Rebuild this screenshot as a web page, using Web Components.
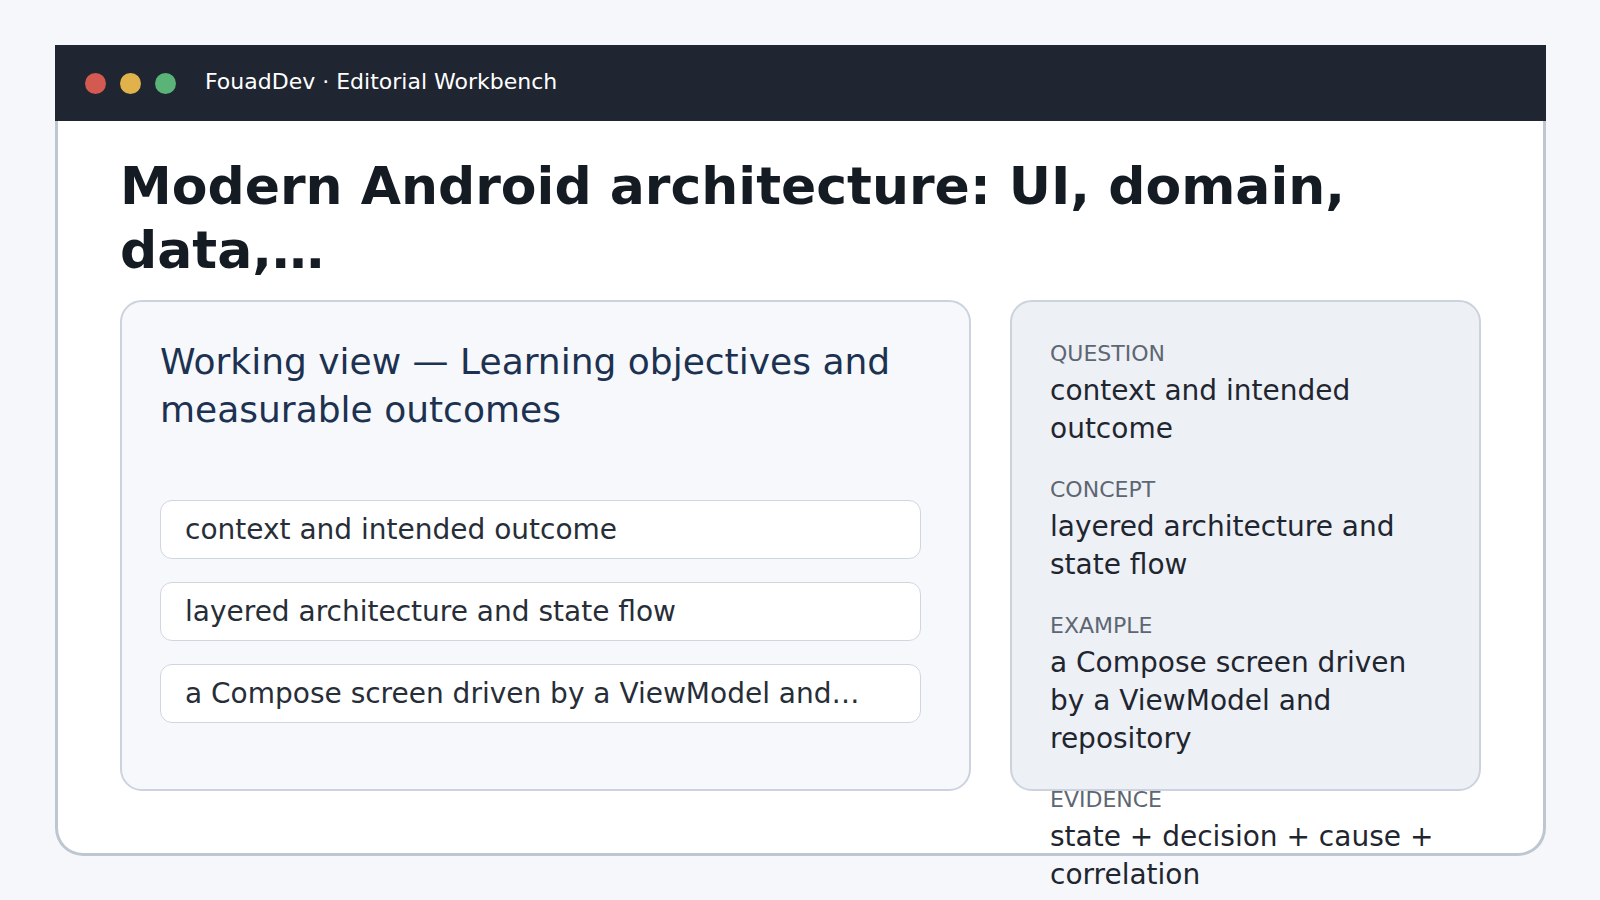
<!DOCTYPE html>
<html lang="en">
<head>
<meta charset="utf-8">
<meta name="viewport" content="width=device-width, initial-scale=1">
<title>FouadDev · Editorial Workbench</title>
<style>
  body {
    margin: 0;
    background: #f5f7fb;
    color: #1f2630;
    font-family: "DejaVu Sans", sans-serif;
  }
</style>
</head>
<body>
<workbench-window>
  <window-bar slot="bar">FouadDev · Editorial Workbench</window-bar>
  <span slot="title">Modern Android architecture: UI, domain, data,…</span>
  <working-view>
    <span slot="heading">Working view — Learning objectives and measurable outcomes</span>
    <view-item>context and intended outcome</view-item>
    <view-item>layered architecture and state flow</view-item>
    <view-item>a Compose screen driven by a ViewModel and…</view-item>
  </working-view>
  <note-panel>
    <note-entry label="QUESTION">context and intended outcome</note-entry>
    <note-entry label="CONCEPT">layered architecture and state flow</note-entry>
    <note-entry label="EXAMPLE">a Compose screen driven by a ViewModel and repository</note-entry>
    <note-entry label="EVIDENCE">state + decision + cause + correlation</note-entry>
  </note-panel>
</workbench-window>

<script>
  class BaseElement extends HTMLElement {
    constructor() {
      super();
      this.attachShadow({ mode: "open" }).innerHTML = this.constructor.markup;
    }
  }

  // Window frame: bar on top, bordered body with a title and two columns.
  customElements.define("workbench-window", class extends BaseElement {
    static markup = `
      <style>
        :host { display: flex; flex-direction: column; box-sizing: border-box; height: 100vh; padding: 45px 54px 44px 55px; }
        main {
          flex: 1; min-height: 0; box-sizing: border-box;
          display: flex; flex-direction: column; gap: 18px;
          padding: 33px 62px 62px;
          background: #fff; border: 3px solid #bec6d2; border-top: 0;
          border-radius: 0 0 28px 28px;
        }
        h1 { margin: 0; font-size: 52px; line-height: 64px; font-weight: 700; color: #151b23; }
        .columns {
          flex: 1; min-height: 0; display: grid; column-gap: 39px;
          grid-template-columns: minmax(0, 851fr) minmax(0, 471fr);
          grid-template-rows: minmax(0, 1fr);
        }
      </style>
      <slot name="bar"></slot>
      <main>
        <h1><slot name="title"></slot></h1>
        <div class="columns"><slot></slot></div>
      </main>`;
  });

  customElements.define("window-bar", class extends BaseElement {
    static markup = `
      <style>
        :host {
          display: flex; align-items: center; gap: 29px;
          box-sizing: border-box; padding: 23px 30px 25px;
          background: #202631; color: #fff;
          font-size: 22px; line-height: 28px;
        }
        .dots { display: flex; gap: 14px; padding-top: 3px; }
        button { width: 21px; height: 21px; padding: 0; border: 0; border-radius: 50%; }
        .close { background: #d35a51; }
        .minimise { background: #e1b24b; }
        .zoom { background: #5ab377; }
      </style>
      <div class="dots">
        <button class="close" type="button" aria-label="Close"></button>
        <button class="minimise" type="button" aria-label="Minimise"></button>
        <button class="zoom" type="button" aria-label="Zoom"></button>
      </div>
      <span><slot></slot></span>`;
  });

  customElements.define("working-view", class extends BaseElement {
    static markup = `
      <style>
        :host {
          display: block; box-sizing: border-box; padding: 36px 48px 36px 38px;
          background: #f6f8fc; border: 2px solid #ccd3de; border-radius: 22px;
        }
        h2 { margin: 0 0 66px; font-size: 36px; line-height: 48px; font-weight: 400; color: #1c3250; }
        .items { display: flex; flex-direction: column; gap: 23px; }
      </style>
      <h2><slot name="heading"></slot></h2>
      <div class="items" role="list"><slot></slot></div>`;
  });

  customElements.define("view-item", class extends BaseElement {
    static markup = `
      <style>
        :host {
          display: block; padding: 10px 24px 9px;
          background: #fff; border: 1px solid #d0d6e0; border-radius: 12px;
          color: #272e38; font-size: 28px; line-height: 38px;
          white-space: nowrap;
        }
      </style>
      <slot></slot>`;
    connectedCallback() { this.setAttribute("role", "listitem"); }
  });

  // The entries may run past the panel's lower edge and stay visible.
  customElements.define("note-panel", class extends BaseElement {
    static markup = `
      <style>
        :host {
          display: block; box-sizing: border-box; padding: 38px;
          background: #edf0f5; border: 2px solid #ccd3de; border-radius: 22px;
        }
        div { display: flex; flex-direction: column; gap: 28px; }
      </style>
      <div><slot></slot></div>`;
  });

  customElements.define("note-entry", class extends BaseElement {
    static markup = `
      <style>
        :host { display: block; }
        h3 { margin: 0 0 4px; font-size: 22px; line-height: 28px; font-weight: 400; color: #5d6672; }
        p { margin: 0; font-size: 28px; line-height: 38px; color: #1f2630; }
      </style>
      <h3></h3>
      <p><slot></slot></p>`;
    connectedCallback() {
      this.shadowRoot.querySelector("h3").textContent = this.getAttribute("label");
    }
  });
</script>
</body>
</html>
